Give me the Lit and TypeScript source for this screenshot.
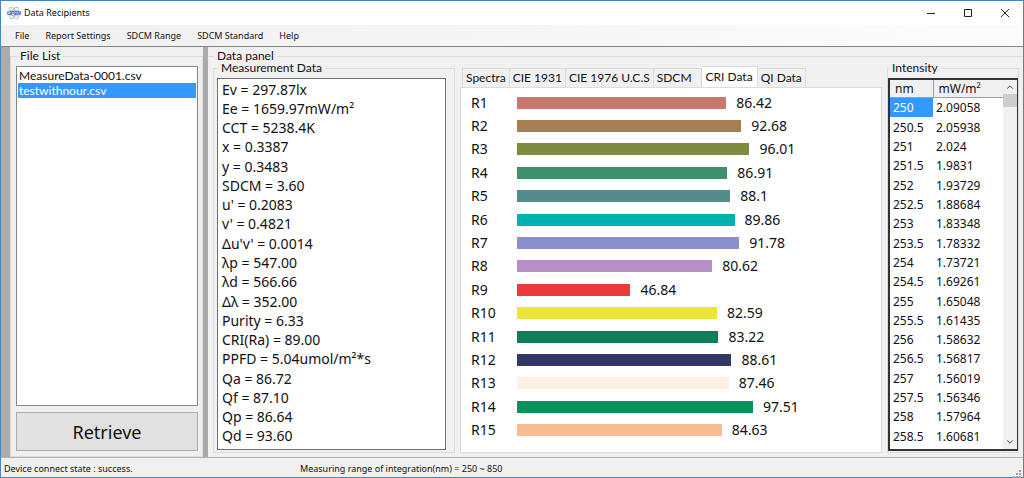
import { LitElement, html, css, svg } from "lit";
import { customElement, state } from "lit/decorators.js";

const MENUS = ["File", "Report Settings", "SDCM Range", "SDCM Standard", "Help"];
const FILES = ["MeasureData-0001.csv", "testwithnour.csv"];
const MEASUREMENTS = [
  "Ev = 297.87lx", "Ee = 1659.97mW/m²", "CCT = 5238.4K", "x = 0.3387", "y = 0.3483",
  "SDCM = 3.60", "u' = 0.2083", "v' = 0.4821", "Δu'v' = 0.0014", "λp = 547.00",
  "λd = 566.66", "Δλ = 352.00", "Purity = 6.33", "CRI(Ra) = 89.00",
  "PPFD = 5.04umol/m²*s", "Qa = 86.72", "Qf = 87.10", "Qp = 86.64", "Qd = 93.60",
];
const TABS = ["Spectra", "CIE 1931", "CIE 1976 U.C.S", "SDCM", "CRI Data", "QI Data"];
const CRI: [number, string][] = [
  [86.42, "#c47a6f"], [92.68, "#a67f55"], [96.01, "#808b42"], [86.91, "#3e906a"],
  [88.1, "#528d89"], [89.86, "#00b3b0"], [91.78, "#8a8fcb"], [80.62, "#b58fc6"],
  [46.84, "#eb3a3c"], [82.59, "#ebe636"], [83.22, "#0b7f5a"], [88.61, "#323766"],
  [87.46, "#fdf0e2"], [97.51, "#07935b"], [84.63, "#f9bd93"],
];
const INTENSITY: [string, string][] = [
  ["250", "2.09058"], ["250.5", "2.05938"], ["251", "2.024"], ["251.5", "1.9831"],
  ["252", "1.93729"], ["252.5", "1.88684"], ["253", "1.83348"], ["253.5", "1.78332"],
  ["254", "1.73721"], ["254.5", "1.69261"], ["255", "1.65048"], ["255.5", "1.61435"],
  ["256", "1.58632"], ["256.5", "1.56817"], ["257", "1.56019"], ["257.5", "1.56346"],
  ["258", "1.57964"], ["258.5", "1.60681"],
];
const BAR_SCALE = 0.665;

@customElement("app-root")
export class AppRoot extends LitElement {
  @state() private file = 1;
  @state() private tab = 4;

  static styles = css`
    :host {
      display: flex;
      flex-direction: column;
      box-sizing: border-box;
      min-height: 100vh;
      border: 1px solid #4a86bd;
      background: #f0f0f0;
      color: #111;
      font: 12px/16px Lato, "Noto Sans", sans-serif;
    }
    * { box-sizing: border-box; }
    button { font: inherit; color: inherit; border: 0; background: none; padding: 0; margin: 0; }
    fieldset {
      margin: 0;
      padding: 0;
      min-width: 0;
      border: 1px solid #dcdcdc;
    }
    legend { padding: 0 3px; margin-left: 1px; background: #f0f0f0; }
    .titlebar {
      display: flex;
      align-items: center;
      height: 24px;
      padding-left: 6px;
      background: #fff;
      font: 9px/16px "Noto Sans", sans-serif;
    }
    .titlebar h1 { font: inherit; margin: 0 auto 0 3px; }
    .win { width: 37px; height: 24px; display: grid; place-items: center; }
    .menubar {
      display: flex;
      gap: 16px;
      height: 22px;
      padding-left: 14px;
      background: linear-gradient(90deg, #f0f0f0, #fcfcfc);
      border-bottom: 1px solid #858585;
      font: 9px/21px "Noto Sans", sans-serif;
    }
    .body {
      flex: 1;
      display: grid;
      grid-template-columns: 9px 193px 5px minmax(0, 1fr);
      border-bottom: 1px solid #b4b4b4;
    }
    .strip { background: #ababab; }
    .files { display: flex; flex-direction: column; padding: 2px 4px 5px 5px; }
    .filebox {
      flex: 1;
      border: 1px solid #82878f;
      background: #fff;
      padding: 1px;
      margin-bottom: 6px;
    }
    .file { display: block; width: 100%; height: 15px; line-height: 15px; text-align: left; padding-left: 1px; }
    .file.on, td.on { background: #3399ff; color: #fff; }
    .retrieve {
      height: 39px;
      border: 1px solid #adadad;
      background: #e1e1e1;
      font: 18px/24px "Noto Sans", sans-serif;
    }
    .data {
      display: grid;
      grid-template-columns: 242px minmax(0, 1fr) 132px;
      gap: 5px;
      padding: 0 4px 4px 5px;
      border-width: 1px 0 0;
    }
    .files-col, .data-col { display: grid; padding-top: 1px; min-width: 0; }
    .data-col legend { line-height: 12px; }
    .data-col { padding-top: 3px; }
    .measure { display: flex; padding: 4px 8px 2px 3px; }
    .measure ul {
      flex: 1;
      display: grid;
      grid-auto-rows: minmax(0, 1fr);
      margin: 0;
      padding: 1px 4px 3px;
      list-style: none;
      background: #fff;
      border: 1px solid #6e7176;
      font: 14px/18px "Noto Sans", sans-serif;
    }
    .measure li { display: flex; align-items: center; }
    .tabs { display: flex; flex-direction: column; padding-top: 4px; }
    .tablist { display: flex; align-items: flex-end; padding-left: 2px; }
    .tab {
      height: 19px;
      padding: 0 3px;
      border: 1px solid #d9d9d9;
      border-left-width: 0;
      border-bottom: 0;
      white-space: nowrap;
    }
    .tab:first-child { border-left-width: 1px; }
    .tab.short { padding-right: 9px; }
    .tab.on { background: #fff; height: 21px; padding: 0 4px; }
    .chart {
      flex: 1;
      display: grid;
      grid-auto-rows: minmax(0, 1fr);
      background: #fff;
      border: 1px solid #dcdcdc;
      padding: 3px 0 10px 10px;
      font: 14px/18px "Noto Sans", sans-serif;
    }
    .row { display: grid; grid-template-columns: 46px minmax(0, 1fr); align-items: center; }
    .track { display: flex; align-items: center; gap: 10px; }
    .bar { height: 12px; flex: none; }
    .intensity { display: flex; padding: 4px 0 1px; }
    .grid { flex: 1; display: flex; border: 2px solid #333; border-right-width: 1px; background: #fff; min-width: 0; }
    .cells { flex: 1; padding-bottom: 3px; }
    table {
      width: 100%;
      height: 100%;
      border-collapse: collapse;
      table-layout: fixed;
      font: 12px/16px "Noto Sans", sans-serif;
    }
    th, td { padding: 0 0 0 3px; text-align: left; font-weight: 400; line-height: 17px; }
    th { background: #f0f0f0; border-bottom: 1px solid #a0a0a0; padding-left: 5px; }
    th:first-child { width: 43px; border-right: 1px solid #a0a0a0; }
    .scroll { width: 14px; display: flex; flex-direction: column; background: #f0f0f0; }
    .scroll button { height: 14px; display: grid; place-items: center; }
    .thumb { height: 13px; background: #cdcdcd; margin-bottom: auto; }
    .status {
      display: grid;
      grid-template-columns: 296px 1fr auto;
      height: 19px;
      padding-left: 3px;
      font: 9px/22px "Noto Sans", sans-serif;
    }
    .grip { align-self: end; margin: 0 2px 2px 0; }
    svg { display: block; }
  `;

  private logo() {
    return html`<svg width="14" height="14" viewBox="0 0 14 14" aria-hidden="true">
      <g fill="none" stroke="#a3bcdc" stroke-width="0.9">
        <ellipse cx="7" cy="7" rx="2.6" ry="6.6" transform="rotate(32 7 7)" />
        <ellipse cx="7" cy="7" rx="2.6" ry="6.6" transform="rotate(-32 7 7)" />
        <ellipse cx="7" cy="7" rx="6.5" ry="2.6" />
      </g>
      <text x="7" y="9" text-anchor="middle" font-family="Liberation Sans" font-size="5" font-weight="700" font-style="italic" fill="#24559c">UPEN</text>
    </svg>`;
  }

  private glyph(d: string, size = 10) {
    return html`<svg width=${size} height=${size} viewBox="0 0 10 10" fill="none" stroke="#222" aria-hidden="true">${svg`<path d=${d} />`}</svg>`;
  }

  render() {
    return html`
      <header class="titlebar">
        ${this.logo()}
        <h1>Data Recipients</h1>
        <button class="win" aria-label="Minimize">${this.glyph("M1 5.5H9")}</button>
        <button class="win" aria-label="Maximize">${this.glyph("M1.5 1.5H8.5V8.5H1.5Z")}</button>
        <button class="win" aria-label="Close">${this.glyph("M1 1L9 9M9 1L1 9")}</button>
      </header>
      <nav class="menubar">${MENUS.map((m) => html`<button>${m}</button>`)}</nav>
      <main class="body">
        <div class="strip"></div>
        <div class="files-col">
          <fieldset class="files">
            <legend>File List</legend>
            <div class="filebox" role="listbox" aria-label="File List">
              ${FILES.map((f, i) => html`<button class="file ${i === this.file ? "on" : ""}" role="option"
                aria-selected=${i === this.file} @click=${() => (this.file = i)}>${f}</button>`)}
            </div>
            <button class="retrieve">Retrieve</button>
          </fieldset>
        </div>
        <div class="strip"></div>
        <div class="data-col">
          <fieldset class="data">
            <legend>Data panel</legend>
            <fieldset class="measure">
              <legend>Measurement Data</legend>
              <ul>${MEASUREMENTS.map((m) => html`<li>${m}</li>`)}</ul>
            </fieldset>
            <section class="tabs">
              <div class="tablist" role="tablist">
                ${TABS.map((t, i) => html`<button class="tab ${i === this.tab ? "on" : ""} ${t === "SDCM" ? "short" : ""}"
                  role="tab" aria-selected=${i === this.tab} @click=${() => (this.tab = i)}>${t}</button>`)}
              </div>
              <div class="chart" role="tabpanel">
                ${CRI.map(([v, color], i) => html`<div class="row">
                  <span>R${i + 1}</span>
                  <div class="track">
                    <div class="bar" style="width:${v * BAR_SCALE}%;background:${color}"></div>
                    <span>${v}</span>
                  </div>
                </div>`)}
              </div>
            </section>
            <fieldset class="intensity">
              <legend>Intensity</legend>
              <div class="grid">
                <div class="cells">
                  <table>
                    <thead><tr><th>nm</th><th>mW/m²</th></tr></thead>
                    <tbody>${INTENSITY.map(([nm, v], i) => html`<tr><td class=${i === 0 ? "on" : ""}>${nm}</td><td>${v}</td></tr>`)}</tbody>
                  </table>
                </div>
                <div class="scroll">
                  <button aria-label="Scroll up">${this.glyph("M1.5 7L5 3.5L8.5 7", 8)}</button>
                  <div class="thumb"></div>
                  <button aria-label="Scroll down">${this.glyph("M1.5 3L5 6.5L8.5 3", 8)}</button>
                </div>
              </div>
            </fieldset>
          </fieldset>
        </div>
      </main>
      <footer class="status">
        <span>Device connect state : success.</span>
        <span>Measuring range of integration(nm) = 250 ~ 850</span>
        <svg class="grip" width="8" height="8" viewBox="0 0 8 8" fill="#a0a0a0" aria-hidden="true">
          <path d="M6 0h2v2h-2zM3 3h2v2h-2zM6 3h2v2h-2zM0 6h2v2h-2zM3 6h2v2h-2zM6 6h2v2h-2z" />
        </svg>
      </footer>
    `;
  }
}
